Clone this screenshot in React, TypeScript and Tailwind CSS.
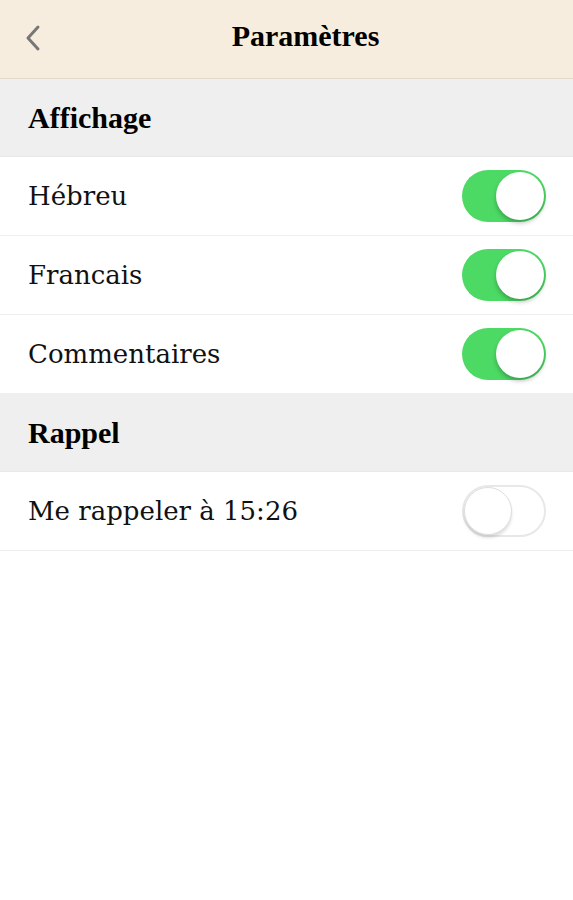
const serifHead = "font-['Liberation_Serif',serif]";
const serifBody = "font-['DejaVu_Serif',serif]";

const Toggle = ({ on }: { on: boolean }) => (
  <div
    className={
      "relative w-[84px] h-[52px] rounded-full " +
      (on ? "bg-[#4cd964]" : "bg-white border-2 border-[#e8e8e8]")
    }
  >
    <div
      className={
        "absolute w-[48px] h-[48px] rounded-full bg-white " +
        (on
          ? "top-[2px] right-[2px] shadow-[0_3px_4px_rgba(0,0,0,0.25)]"
          : "left-0 top-0 border border-[#dedede] shadow-[0_3px_3px_rgba(0,0,0,0.12)]")
      }
    />
  </div>
);

const SectionHeader = ({ title }: { title: string }) => (
  <div className="h-[78px] bg-[#efefef] flex items-center px-[28px] border-b border-[#e8e8e8]">
    <span className={serifHead + " text-[30px] font-semibold text-black"}>{title}</span>
  </div>
);

const Row = ({ label, on }: { label: string; on: boolean }) => (
  <div className="h-[79px] bg-white flex items-center justify-between pl-[28px] pr-[27px] border-b border-[#eeeeee]">
    <span className={serifBody + " text-[26px] text-[#111]"}>{label}</span>
    <Toggle on={on} />
  </div>
);

export default function App() {
  return (
    <div className="w-[573px] h-[900px] bg-white">
      <div className="h-[79px] bg-[#f7eddf] border-b border-[#e2d9cc] flex items-center relative">
        <svg
          className="absolute left-[22px] top-[24px]"
          width="22"
          height="28"
          viewBox="0 0 22 28"
          fill="none"
        >
          <path d="M16 3 L6 14 L16 25" stroke="#777" strokeWidth="3" strokeLinecap="round" strokeLinejoin="round" />
        </svg>
        <span className={serifHead + " w-full text-center pl-[38px] pb-[8px] text-[30px] font-semibold text-black"}>
          Paramètres
        </span>
      </div>
      <SectionHeader title="Affichage" />
      <Row label="Hébreu" on />
      <Row label="Francais" on />
      <Row label="Commentaires" on />
      <SectionHeader title="Rappel" />
      <Row label="Me rappeler à 15:26" on={false} />
    </div>
  );
}
